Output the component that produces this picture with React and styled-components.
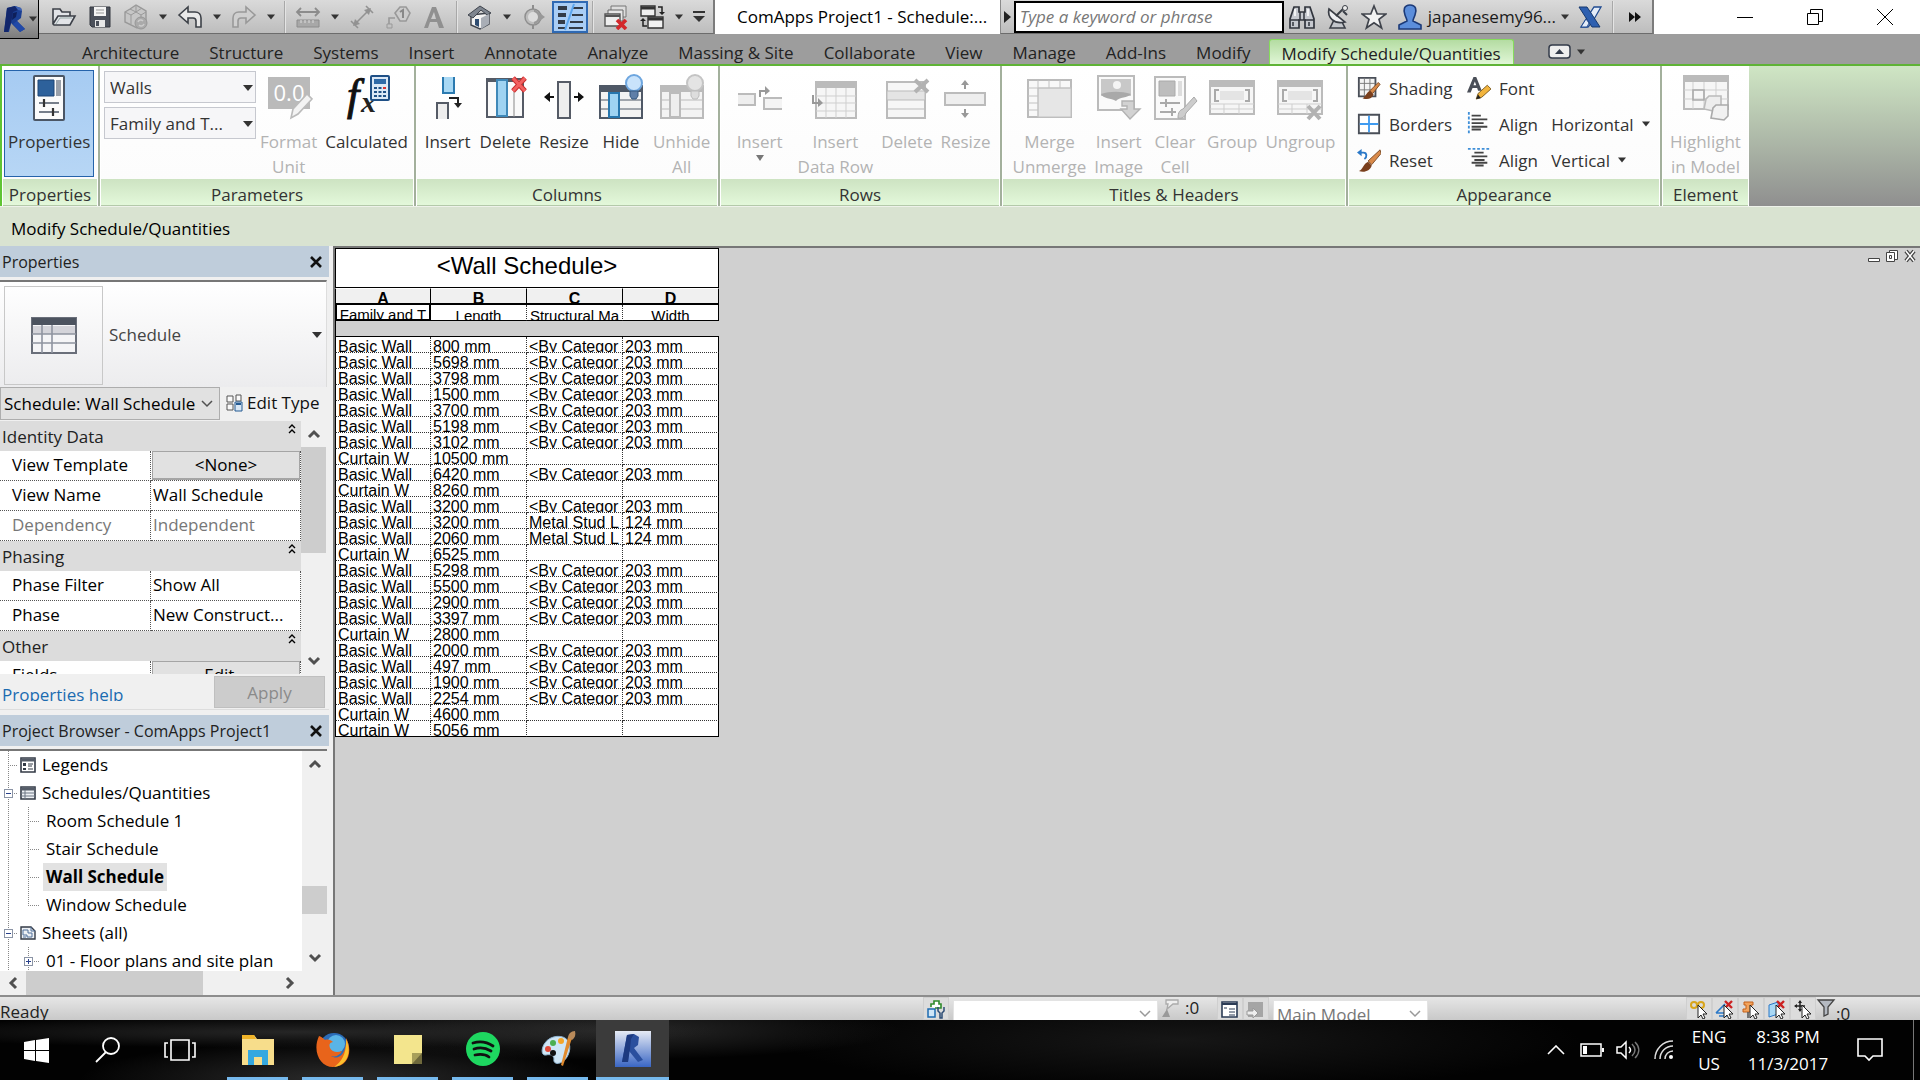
import React from 'react'
import styled, { createGlobalStyle, css } from 'styled-components'

const GlobalStyle = createGlobalStyle`
* { box-sizing: border-box; }
body {
  margin: 0;
  font-family: "Open Sans", "Noto Sans", sans-serif;
  font-size: 17px;
  color: #1a1a1a;
  overflow: hidden;
}
button, input, select { font: inherit; color: inherit; }
button { background: none; border: none; padding: 0; margin: 0; }
svg { display: block; flex: none; }
`

const App_ = styled.div`
  display: flex;
  flex-direction: column;
  height: 100vh;
  background: #f0f0f0;
`

/* ---------- title bar ---------- */
const TitleBar = styled.header`
  display: flex;
  height: 34px;
  flex: none;
  background: #fff;
`
const AppButton = styled.button`
  width: 39px;
  height: 39px;
  margin-bottom: -5px;
  padding-left: 3px;
  position: relative;
  z-index: 1;
  display: flex;
  align-items: center;
  gap: 3px;
  background: linear-gradient(#c4c4c4, #7c7c7c);
  border-right: 1px solid #000;
  border-bottom: 1px solid #000;
`
const BarStrip = styled.div`
  display: flex;
  align-items: center;
  background: linear-gradient(#dadada, #bdbdbd);
  border-right: 2px solid #7c7c7c;
  border-bottom: 1px solid #6c6c6c;
`
const QuickAccess = styled(BarStrip)`
  padding: 0 3px 0 7px;
`
const InfoCenter = styled(BarStrip)`
  border-left: 1px solid #8a8a8a;
`
const BarButton = styled.button`
  width: ${({ $w }) => $w || 36}px;
  height: 32px;
  display: flex;
  align-items: center;
  justify-content: center;
  ${({ $on }) => $on && css`
    background: #a9cdf5;
    border: 2px solid #2f69b3;
  `}
`
const BarLine = styled.span`
  width: 2px;
  height: 32px;
  margin: 0 4px;
  background: linear-gradient(90deg, #a8a8a8 50%, #e4e4e4 50%);
`
const WindowTitle = styled.h1`
  flex: 1;
  min-width: 0;
  margin: 0;
  padding-left: 22px;
  font-size: 17px;
  font-weight: 400;
  line-height: 34px;
  color: #000;
  white-space: nowrap;
  overflow: hidden;
`
const SearchBox = styled.input`
  width: 270px;
  height: 32px;
  padding: 0 4px;
  border: 2px solid #000;
  background: #fff;
  font-style: italic;
  outline: none;
  &::placeholder { color: #777; opacity: 1; }
`
const UserButton = styled.button`
  display: flex;
  align-items: center;
  height: 32px;
  padding: 0 3px 0 5px;
  gap: 5px;
`
const WindowButtons = styled.div`
  display: flex;
  padding-left: 56px;
`
const WindowButton = styled.button`
  width: 70px;
  display: flex;
  align-items: center;
  justify-content: center;
`

/* ---------- ribbon ---------- */
const Tabs = styled.nav`
  display: flex;
  align-items: flex-end;
  flex: none;
  height: 32px;
  padding-left: 67px;
  background: #9d9d9d;
  border-bottom: 2px solid #5fb336;
`
const Tab = styled.button`
  height: 25px;
  padding: 0 15px;
  line-height: 27px;
  white-space: nowrap;
  color: #222;
  ${({ $active }) => $active && css`
    margin-left: 3px;
    background: linear-gradient(#b4dca2, #e0f6d6);
    border: 1px solid #86dc5c;
    border-bottom: none;
    border-radius: 3px 3px 0 0;
    padding: 0 12px;
  `}
`
const RibbonToggle = styled.button`
  display: flex;
  align-items: center;
  gap: 6px;
  height: 25px;
  margin-left: 34px;
`
const Ribbon = styled.section`
  display: flex;
  flex: none;
  height: 140px;
  border-left: 2px solid #5fc434;
  background: linear-gradient(#cfe6c4, #8f8f8f);
`
const Panel = styled.div`
  flex: 0 0 ${({ $w }) => $w}px;
  min-width: 0;
  display: flex;
  flex-direction: column;
  background: #fff;
  border-right: 2px solid #a3b09c;
  padding: 0 1px;
  &:last-child { border-right: none; }
`
const PanelBody = styled.div`
  flex: 1;
  min-height: 0;
  display: flex;
  justify-content: ${({ $justify }) => $justify || 'center'};
  background: linear-gradient(#fff, #fcfcfc);
`
const PanelTitle = styled.h2`
  height: 27px;
  margin: 0;
  font-size: 17px;
  font-weight: 400;
  line-height: 31px;
  text-align: center;
  color: #333;
  background: linear-gradient(#cde3c2, #e3f8da);
  border-bottom: 1px solid #b4c9aa;
  overflow: hidden;
`
const BigButton = styled.button`
  display: flex;
  flex-direction: column;
  align-items: center;
  gap: 7px;
  padding: 8px 4px 0;
  line-height: 25px;
  white-space: pre;
  color: #333;
  &:disabled { color: #b3b3b3; }
  ${({ $on }) => $on && css`
    margin: 4px 1px 2px;
    padding: 3px 3px 0;
    background: linear-gradient(#a6cbf2, #b7d6f5);
    border: 1px solid #2563ab;
  `}
`
const ParamSelects = styled.div`
  display: flex;
  flex-direction: column;
  gap: 4px;
  padding: 5px 0 0 3px;
`
const SelectWrap = styled.div`
  position: relative;
  width: ${({ $w }) => $w}px;
  height: ${({ $h }) => $h || 32}px;
  svg {
    position: absolute;
    right: ${({ $inset }) => $inset || 2}px;
    top: 14px;
    pointer-events: none;
  }
`
const Select = styled.select`
  appearance: none;
  width: 100%;
  height: 100%;
  padding: 0 22px 0 ${({ $pad }) => $pad || 5}px;
  border: 1px solid ${({ $line }) => $line || '#c6c8cf'};
  border-radius: 0;
  background: ${({ $bg }) => $bg || '#f6f6f8'};
  color: ${({ $color }) => $color || '#333'};
`
const InstanceSelect = styled(SelectWrap)`
  svg { top: 10px; }
`
const AppearanceGrid = styled.div`
  display: grid;
  grid-template-columns: 110px 1fr;
  grid-auto-rows: 36px;
  flex: 1;
  padding: 4px 0 0 8px;
`
const SmallButton = styled.button`
  display: flex;
  align-items: center;
  gap: 8px;
  white-space: pre;
  color: #333;
`
const OptionsBar = styled.div`
  flex: none;
  height: 40px;
  padding-left: 11px;
  line-height: 44px;
  background: #d9e3d1;
  border-top: 1px solid #eef2ea;
  color: #000;
`

/* ---------- left dock ---------- */
const Main = styled.main`
  display: flex;
  flex: 1;
  min-height: 0;
`
const Dock = styled.aside`
  width: 333px;
  flex: none;
  display: flex;
  flex-direction: column;
  padding-right: 4px;
  background: #f0f0f0;
`
const DockHead = styled.div`
  flex: none;
  display: flex;
  align-items: center;
  justify-content: space-between;
  height: 31px;
  padding: 0 6px 0 2px;
  background: #bfcddb;
`
const DockTitle = styled.h2`
  margin: 0;
  font-size: 16px;
  font-weight: 400;
  color: #222;
`
const TypeSelector = styled.button`
  flex: none;
  display: flex;
  align-items: center;
  gap: 6px;
  height: 107px;
  margin: 3px 2px 0 0;
  padding: 0 3px 0 4px;
  border-top: 2px solid #777;
  border-right: 1px solid #ddd;
  background: linear-gradient(#fff, #ececee);
  color: #444;
`
const Thumb = styled.span`
  width: 99px;
  height: 99px;
  margin-top: 2px;
  display: flex;
  align-items: center;
  justify-content: center;
  border: 1px solid #c8c8c8;
`
const Grow = styled.span`
  flex: ${({ $n }) => $n || 1};
  text-align: left;
`
const InstanceRow = styled.div`
  flex: none;
  display: flex;
  height: 34px;
  gap: 6px;
`
const EditType = styled.button`
  display: flex;
  align-items: center;
  gap: 4px;
  padding-bottom: 3px;
  white-space: nowrap;
  color: #111;
`
const PropsScroll = styled.div`
  flex: 0 0 253px;
  display: flex;
  overflow: hidden;
  padding-right: 3px;
  background: #f0f0f0;
`
const PropsTable = styled.table`
  flex: 1;
  height: 0;
  border-collapse: separate;
  border-spacing: 0;
  table-layout: fixed;
  background: #fff;
  color: #000;
`
const GroupCell = styled.th`
  height: 30px;
  padding: 0 4px 0 2px;
  background: #dcdcdc;
  font-weight: 400;
  color: #222;
`
const GroupLine = styled.div`
  display: flex;
  align-items: center;
  justify-content: space-between;
  svg { margin-bottom: 14px; }
`
const PropName = styled.th`
  width: 151px;
  height: 30px;
  padding: 0 0 0 12px;
  text-align: left;
  vertical-align: top;
  font-weight: 400;
  white-space: nowrap;
  line-height: 28px;
  border-bottom: 1px dotted #555;
  border-right: 1px dotted #555;
  color: ${({ $muted }) => ($muted ? '#777' : '#000')};
`
const PropValue = styled.td`
  height: 30px;
  padding: 0 0 0 ${({ $button }) => ($button ? 1 : 2)}px;
  vertical-align: top;
  white-space: nowrap;
  line-height: 28px;
  border-bottom: 1px dotted #555;
  border-right: 1px dotted #555;
  color: ${({ $muted }) => ($muted ? '#777' : '#000')};
`
const ValueButton = styled.button`
  display: block;
  width: 100%;
  height: 29px;
  line-height: 26px;
  background: #e1e1e1;
  border: 1px solid #a5a5a5;
  border-bottom-width: 2px;
`
const ScrollV = styled.div`
  width: 25px;
  flex: none;
  display: flex;
  flex-direction: column;
  align-items: stretch;
  background: #f0f0f0;
`
const ScrollH = styled.div`
  flex: none;
  display: flex;
  height: 24px;
  padding-right: 26px;
  background: #f0f0f0;
`
const ScrollArrow = styled.button`
  flex: 0 0 26px;
  display: flex;
  align-items: center;
  justify-content: center;
`
const ScrollThumb = styled.span`
  flex: 0 0 ${({ $size }) => $size}px;
  background: #cdcdcd;
`
const HelpRow = styled.div`
  flex: none;
  display: flex;
  align-items: flex-start;
  justify-content: space-between;
  height: 36px;
  padding: 2px 4px 0 2px;
  border-bottom: 1px solid #ddd;
  margin-bottom: 5px;
`
const HelpLink = styled.a`
  height: 25px;
  line-height: 37px;
  overflow: hidden;
  color: #1b6bb0;
  text-decoration: none;
`
const ApplyButton = styled.button`
  width: 111px;
  height: 32px;
  background: #cccccc;
  border: 1px solid #bfbfbf;
  color: #8a8a8a;
`
const TreeWrap = styled.div`
  flex: 1;
  min-height: 0;
  display: flex;
  margin: 3px 2px 0 0;
  border-top: 2px solid #777;
  background: #fff;
`
const Tree = styled.ul`
  flex: 1;
  margin: 0;
  padding: 0;
  list-style: none;
  overflow: hidden;
  color: #000;
`
const TreeRow = styled.li`
  display: flex;
  align-items: center;
  height: 28px;
  white-space: nowrap;
`
const TreeLabel = styled.span`
  line-height: 28px;
  padding: 0 3px;
  ${({ $leaf }) => !$leaf && 'margin-left: 3px;'}
  ${({ $selected }) => $selected && css`
    font-weight: 700;
    background: #e2e2e2;
  `}
`

/* ---------- schedule ---------- */
const Canvas = styled.section`
  flex: 1;
  min-width: 0;
  display: flex;
  justify-content: space-between;
  align-items: flex-start;
  background: #d0d0d0;
  border-left: 2px solid #777;
  border-top: 2px solid #777;
  overflow: hidden;
`
const ScheduleTable = styled.table`
  width: 384px;
  table-layout: fixed;
  border-collapse: separate;
  border-spacing: 0;
  font-family: "Liberation Sans", Arial, sans-serif;
  font-size: 16px;
  color: #000;
`
const ScheduleTitle = styled.th`
  height: 40px;
  padding: 0;
  background: #fff;
  border: 1px solid #000;
  font-size: 24px;
  font-weight: 400;
  line-height: 34px;
  vertical-align: top;
`
const Letter = styled.th`
  height: 17px;
  padding: 0;
  background: #f0f0f0;
  border-right: 1px solid #000;
  border-bottom: 2px solid #000;
  border-top: 1px solid #fff;
  &:first-child { border-left: 1px solid #000; }
`
const Heading = styled.th`
  height: 16px;
  padding: 0;
  background: #fff;
  font-weight: 400;
  font-size: 15px;
  border-bottom: 1px solid #000;
  border-right: 1px dotted #333;
  &:first-child { border: 1px solid #000; border-width: 0 2px 2px; }
  &:last-child { border-right: 1px solid #000; }
`
const Spacer = styled.td`
  height: 16px;
  padding: 0;
  border-left: 1px solid #000;
  border-bottom: 1px solid #000;
`
const Cell = styled.td`
  height: 16px;
  padding: 0 0 0 2px;
  background: #fff;
  border-bottom: 1px dotted #333;
  border-right: 1px dotted #333;
  &:first-child { border-left: 1px solid #000; }
  &:last-child { border-right: 1px solid #000; }
  tr:last-child > & { border-bottom: 1px solid #000; }
`
const Clip = styled.div`
  height: ${({ $h }) => $h || 15}px;
  line-height: ${({ $lh }) => $lh || 19}px;
  overflow: hidden;
  white-space: nowrap;
`
const ChildButtons = styled.div`
  display: flex;
  gap: 4px;
  padding: 1px 3px 0 0;
`

/* ---------- status bar ---------- */
const StatusBar = styled.footer`
  flex: none;
  display: flex;
  align-items: flex-start;
  height: 25px;
  overflow: hidden;
  border-top: 2px solid #8d8d8d;
  background: linear-gradient(#e6e6e6, #c9c9c9);
  color: #222;
`
const Ready = styled.span`
  flex: 0 1 923px;
  line-height: 30px;
`
const StatusButton = styled.button`
  width: 26px;
  height: 23px;
  display: flex;
  align-items: center;
  justify-content: center;
  border: 1px solid #cfcfcf;
  background: #dcdcdc;
`
const StatusCount = styled.span`
  padding-left: ${({ $low }) => ($low ? 0 : 4)}px;
  line-height: ${({ $low }) => ($low ? 34 : 21)}px;
  width: ${({ $low }) => ($low ? 84 : 36)}px;
`
const StatusSelect = styled(SelectWrap)`
  height: 28px;
  margin: 3px 3px 0 4px;
  svg { top: 7px; }
`

/* ---------- taskbar ---------- */
const Taskbar = styled.footer`
  flex: none;
  display: flex;
  height: 60px;
  background:
    radial-gradient(ellipse 260px 40px at 340px 60px, #2c2c2c, transparent),
    radial-gradient(ellipse 420px 16px at 300px 12px, #262626, transparent),
    radial-gradient(ellipse 300px 30px at 600px 10px, #2a2a2a, transparent),
    radial-gradient(ellipse 400px 50px at 1180px 20px, #161616, transparent),
    #020202;
  color: #fff;
`
const TaskButton = styled.button`
  width: 72px;
  display: flex;
  align-items: center;
  justify-content: center;
`
const TaskApp = styled.button`
  width: 75px;
  padding: 0 ${({ $active }) => ($active ? 1 : 7)}px;
`
const TaskFace = styled.span`
  display: flex;
  align-items: center;
  justify-content: center;
  height: 60px;
  border-bottom: 3px solid #76b9ed;
  background: ${({ $active }) => ($active ? '#3b3b3b' : 'none')};
`
const TaskGroup = styled.div`
  display: flex;
  padding-left: 4px;
`
const Tray = styled.div`
  display: flex;
  margin-left: auto;
`
const TrayButton = styled.button`
  width: ${({ $w }) => $w || 36}px;
  display: flex;
  flex-direction: column;
  align-items: center;
  justify-content: center;
  line-height: 27px;
`
const ShowDesktop = styled.button`
  width: 7px;
  margin-left: 13px;
  border-left: 1px solid #777;
`

/* ---------- icons ---------- */
const Icon = ({ w = 26, h = w, vb, children, ...rest }) => (
  <svg width={w} height={h} viewBox={vb || `0 0 ${w} ${h}`} fill="none" aria-hidden="true" {...rest}>
    {children}
  </svg>
)
const Caret = ({ size = 10, color = '#333' }) => (
  <Icon w={size} h={6} vb="0 0 10 6"><path d="M0 0h10L5 6z" fill={color} /></Icon>
)
const Chevron = ({ dir = 'down', w = 14, stroke = '#505050', sw = 3 }) => {
  const turn = { down: 0, up: 180, left: 90, right: 270 }[dir]
  return (
    <Icon w={w} vb="0 0 14 14">
      <path d="M2 4l5 5 5-5" stroke={stroke} strokeWidth={sw} transform={`rotate(${turn} 7 7)`} />
    </Icon>
  )
}
const RevitLogo = () => (
  <Icon w={23} h={28}>
    <path d="M4 3l8-2 6 2 1 3-1 7-4 3 8 8-5 3-9-9-2 9H1z" fill="#1b3f93" />
    <path d="M4 3l8-2 3 4-5 2-2 11-3 9H1z" fill="#12266b" />
    <path d="M12 1l6 2 1 3-4-1z" fill="#3d62b5" />
    <path d="M10 8l4-1-1 5-4 3z" fill="#0e1f5a" />
    <path d="M14 16l8 8-5 3-7-8z" fill="#2149a8" />
  </Icon>
)
const OpenIcon = () => (
  <Icon><path d="M2 20V5h7l2 3h8v4M2 20l5-8h17l-5 9H3z" fill="#e2e4e8" stroke="#3c4048" strokeWidth="1.600" /><path d="M5 20l4-6h12" stroke="#9aa" /></Icon>
)
const SaveIcon = () => (
  <Icon><path d="M3 3h20v20H5l-2-2z" fill="#4c515b" stroke="#33373f" /><path d="M7 3h12v9H7z" fill="#f4f4f4" /><path d="M9 6h8M9 9h8" stroke="#999" /><path d="M8 16h10v7H8z" fill="#e6e6e6" /><path d="M9 17h3v5H9z" fill="#4c515b" /></Icon>
)
const SyncIcon = () => (
  <Icon><path d="M2 8l5-3 6-4 10 6v11l-9 6-12-6z" fill="#c6c6c6" stroke="#999" strokeWidth="1.400" /><path d="M2 8l6 3 5-3 5 3 5-3M8 11v9M13 2v6M18 11v5M7 5l6 3 6-4" stroke="#999" /><circle cx="18" cy="19" r="6" fill="#aaa" stroke="#979797" /><path d="M15 18a3 3 0 015-1m1 3a3 3 0 01-5 1" stroke="#ccc" strokeWidth="1.500" /></Icon>
)
const UndoIcon = ({ redo }) => (
  <Icon><path transform={redo ? 'matrix(-1 0 0 1 26 0)' : undefined} d="M2 11l9-8v5h7c4 0 6 3 6 6v9h-5v-6c0-2-1-3-3-3h-5v5z" fill={redo ? '#cfcfcf' : '#e9e9e9'} stroke={redo ? '#999' : '#3d4148'} strokeWidth="1.600" /></Icon>
)
const MeasureIcon = () => (
  <Icon><path d="M2 8h22M6 4L2 8l4 4M20 4l4 4-4 4" stroke="#8c8c8c" strokeWidth="1.800" /><path d="M2 16h22v7H2z" fill="#a8a8a8" stroke="#8c8c8c" /><path d="M6 16v3m4-3v3m4-3v3m4-3v3" stroke="#ddd" /></Icon>
)
const DimIcon = () => (
  <Icon><path d="M5 21L21 5M2 17l7 7M17 2l7 7" stroke="#929292" strokeWidth="1.600" /><path d="M4 22l2-7 5 5zM22 4l-7 2 5 5z" fill="#929292" /></Icon>
)
const TagIcon = () => (
  <Icon><path d="M10 9l5-6h6l4 6-4 8h-6z" fill="#ccc" stroke="#999" strokeWidth="1.600" /><path d="M15 8l3-2v8" stroke="#888" strokeWidth="2" /><path d="M10 14H4v6" stroke="#999" strokeWidth="1.600" /><path d="M2 20h5v4H2z" stroke="#999" /></Icon>
)
const TextIcon = () => (
  <Icon><path d="M3 24L11 3h4l8 21h-5l-2-6H9l-2 6zM10 15h5l-2-7z" fill="#909090" fillRule="evenodd" /></Icon>
)
const HouseIcon = () => (
  <Icon><path d="M4 11v10l9 4 9-5V9z" fill="#f3f3f3" stroke="#3f444d" strokeWidth="1.400" /><path d="M1 11L13 2l11 7-4 2-6-5-8 8z" fill="#7e858f" stroke="#3f444d" /><path d="M8 15h4v8l-4-2z" fill="#2f4d72" /><path d="M14 14l8-4v10l-8 5z" fill="#a9aeb6" /></Icon>
)
const SectionIcon = () => (
  <Icon><circle cx="12" cy="13" r="8" fill="#bdbdbd" stroke="#8e8e8e" strokeWidth="1.500" /><path d="M12 1v4M12 21v4" stroke="#8e8e8e" strokeWidth="2" /><path d="M13 5l11 8-11 8z" fill="#999" /><circle cx="12" cy="13" r="5" fill="#dcdcdc" /></Icon>
)
const ThinLinesIcon = () => (
  <Icon w={30}><path d="M3 6h9M3 13h8M3 20h7" stroke="#333b47" strokeWidth="4" /><path d="M18 6h10M17 13h11M15 20h13M3 26h7M14 26h14" stroke="#333b47" strokeWidth="2" /><path d="M19 2L10 28" stroke="#5ba5ee" strokeWidth="2" /></Icon>
)
const CloseHiddenIcon = () => (
  <Icon><path d="M8 2h15v11H8z" fill="#ddd" stroke="#777" /><path d="M5 6h15v11H5z" fill="#e7e7e7" stroke="#666" /><path d="M2 10h15v12H2z" fill="#eee" stroke="#555" strokeWidth="1.400" /><path d="M2 12h15" stroke="#555" strokeWidth="2" /><path d="M14 16l9 9M23 16l-9 9" stroke="#d3282b" strokeWidth="3.600" /></Icon>
)
const SwitchIcon = () => (
  <Icon><path d="M2 2h14v10H2z" fill="#eee" stroke="#333" strokeWidth="1.400" /><path d="M2 4h14" stroke="#333" strokeWidth="3" /><path d="M9 13h15v11H9z" fill="#f2f2f2" stroke="#333" strokeWidth="1.400" /><path d="M9 15h15" stroke="#333" strokeWidth="3" /><path d="M19 3h4v6M4 15v7h4" stroke="#222" strokeWidth="1.500" /><path d="M20 8h6l-3 3zM1 17l3-3 3 3z" fill="#222" /></Icon>
)
const Binoculars = () => (
  <Icon><path d="M5 3h5v5h6V3h5l4 12v9h-9v-8h-6v8H1v-9z" fill="#c6c9cf" stroke="#30343c" strokeWidth="1.700" /><path d="M11 8v8M15 8v8M1 16h9M16 16h9M4 18v4M20 18v4" stroke="#30343c" strokeWidth="1.500" /><path d="M6 5v7M19 5v7" stroke="#fff" strokeWidth="1.500" /></Icon>
)
const Dish = () => (
  <Icon><path d="M5 24l4-8 8 2 3 6z" fill="#c3c6cb" stroke="#3a3e46" strokeWidth="1.600" /><path d="M4 5c-2 8 5 16 16 13z" fill="#eceef1" stroke="#3a3e46" strokeWidth="1.700" /><path d="M11 12l8-8M18 7l4 4" stroke="#3a3e46" strokeWidth="2" /><circle cx="20" cy="4" r="2.500" fill="#eee" stroke="#3a3e46" /></Icon>
)
const StarIcon = () => (
  <Icon><path d="M13 2l3.200 8H25l-7 5.400L20.600 24 13 18.800 5.400 24 8 15.400 1 10h8.800z" fill="#f2f2f2" stroke="#40444c" strokeWidth="1.700" /></Icon>
)
const UserIcon = () => (
  <Icon><path d="M13 1c6 0 7 5 5 10-1 3-2 4-2 6l8 4v4H2v-4l8-4c0-2-1-3-2-6C6 6 7 1 13 1z" fill="#5c8edb" stroke="#1c3a78" strokeWidth="1.600" /></Icon>
)
const ExchangeIcon = () => (
  <Icon><path d="M24 3h-7L4 23h7l5-6z" fill="#e4ecf8" stroke="#1f4a90" strokeWidth="1.300" /><path d="M2 3h8l4 6 9 14h-8l-4-6z" fill="#2d5fb0" stroke="#16396f" /><path d="M4 23l5-8 3 4-2 4z" fill="#e4ecf8" stroke="#1f4a90" /></Icon>
)

const PropertiesIcon = () => (
  <Icon w={48}><rect x="9" y="2" width="30" height="44" rx="1" fill="#fbfbfb" stroke="#4b5665" strokeWidth="2" /><path d="M13 6h16v16H13z" fill="#2d619b" stroke="#1f4676" /><path d="M31 6h5v16h-5z" fill="#9aa1ab" /><path d="M14 29h20M14 38h20" stroke="#4b5665" strokeWidth="1.600" /><path d="M19 25v8M28 34v8" stroke="#333" strokeWidth="2.200" /></Icon>
)
const FormatIcon = () => (
  <Icon w={48}><path d="M3 3h42v32H3z" fill="#bababa" /><text x="24" y="27" textAnchor="middle" fontFamily="Open Sans" fontSize="22" fill="#fff">0.0</text><path d="M26 44l2-9 14-15 5 5-14 15z" fill="#f3f3f3" stroke="#bbb" strokeWidth="1.600" /></Icon>
)
const CalcIcon = () => (
  <Icon w={48}>
    <text x="4" y="36" fontFamily="Liberation Serif" fontStyle="italic" fontWeight="400" fontSize="44" fill="#111" stroke="#111">f</text>
    <text x="18" y="38" fontFamily="Liberation Serif" fontStyle="italic" fontWeight="700" fontSize="30" fill="#222">x</text>
    <rect x="28" y="2" width="18" height="24" rx="1" fill="#dbe8f6" stroke="#1f5086" strokeWidth="2" />
    <path d="M31 5h12v5H31z" fill="#2f6aa8" />
    <path d="M31 14h12M31 18h12M31 22h12" stroke="#1f5086" strokeWidth="2" strokeDasharray="3 1.500" />
    <path d="M40 14h3" stroke="#d33" strokeWidth="2" />
  </Icon>
)
const ColInsertIcon = () => (
  <Icon w={48}><path d="M19 3v16h11V3" fill="#a8d8f4" stroke="#2b7ab0" strokeWidth="2" /><path d="M13 45V29h11v16" fill="#eee" stroke="#555b66" strokeWidth="2" /><path d="M25 24h9v6" stroke="#222" strokeWidth="2" /><path d="M30 29h8l-4 5z" fill="#222" /></Icon>
)
const ColDeleteIcon = () => (
  <Icon w={48}><path d="M6 5h36v38H6z" fill="#fafafa" stroke="#555b66" strokeWidth="2" /><path d="M6 5h26v3H6z" fill="#555b66" /><path d="M16 6h10v36H16z" fill="#9fd3f2" stroke="#3f88b8" strokeWidth="2" /><path d="M33 16v27" stroke="#888" /><path d="M32 4l12 13M44 4L32 17" stroke="#c92d2d" strokeWidth="5" /><path d="M32 4l12 13M44 4L32 17" stroke="#f26060" strokeWidth="3" /></Icon>
)
const ColResizeIcon = () => (
  <Icon w={48}><path d="M18 8h12v36H18z" fill="#eee" stroke="#555b66" strokeWidth="2" /><path d="M14 23H8M34 23h6" stroke="#111" strokeWidth="2" /><path d="M10 18v10l-6-5zM38 18v10l6-5z" fill="#111" /></Icon>
)
const ColHideIcon = ({ muted }) => {
  const line = muted ? '#bbb' : '#4f5866'
  return (
    <Icon w={48}><path d="M3 12h42v32H3z" fill="#f3f3f3" stroke={line} strokeWidth="2" /><path d="M3 12h42v6H3z" fill={line} /><path d="M3 26h42M3 35h42" stroke={line} /><path d="M12 19h10v24H12z" fill={muted ? '#eee' : '#9fd3f2'} stroke={muted ? '#bbb' : '#2776ad'} strokeWidth="2" /><circle cx="37" cy="9" r="8" fill={muted ? '#e4e4e4' : '#c9e3fb'} stroke={muted ? '#c4c4c4' : '#6ea6df'} strokeWidth="2" /><path d="M33 17h8v5l-2 3h-4l-2-3z" fill={muted ? '#ddd' : '#5f7fa8'} stroke={muted ? '#bbb' : '#34587f'} /></Icon>
  )
}
const RowInsertIcon = () => (
  <Icon w={48}><path d="M2 20h17v11H2" fill="#eee" stroke="#bbb" strokeWidth="2" /><path d="M46 24H28v11h18" fill="#f4f4f4" stroke="#bbb" strokeWidth="2" /><path d="M24 23v-6h6" stroke="#999" strokeWidth="2" /><path d="M29 12v9l5-4z" fill="#999" /></Icon>
)
const RowDataIcon = () => (
  <Icon w={48}><path d="M5 8h40v36H5z" fill="#f6f6f6" stroke="#bbb" strokeWidth="2" /><path d="M5 8h40v6H5z" fill="#bbb" /><path d="M5 22h40M5 29h40M5 37h40M15 14v30M25 14v30M35 14v30" stroke="#cfcfcf" /><path d="M2 21v8h6" stroke="#999" strokeWidth="2" /><path d="M7 24v9l5-4z" fill="#999" /></Icon>
)
const RowDeleteIcon = () => (
  <Icon w={48}><path d="M4 8h38v36H4z" fill="#f6f6f6" stroke="#bbb" strokeWidth="2" /><path d="M4 17h38v9H4z" fill="#e4e4e4" stroke="#bbb" /><path d="M4 35h38" stroke="#bbb" /><path d="M32 6l13 12M45 6L32 18" stroke="#b2b2b2" strokeWidth="4" /></Icon>
)
const RowResizeIcon = () => (
  <Icon w={48}><path d="M4 19h40v12H4z" fill="#eee" stroke="#bbb" strokeWidth="2" /><path d="M24 15V9M24 35v5" stroke="#999" strokeWidth="2" /><path d="M20 11h8l-4-5zM20 39h8l-4 5z" fill="#999" /></Icon>
)
const MergeIcon = () => (
  <Icon w={48}><path d="M3 6h43v37H3z" fill="#f8f8f8" stroke="#bbb" strokeWidth="2" /><path d="M13 14h33v29H13z" fill="#e6e6e6" stroke="#c2c2c2" /><path d="M13 6v37M3 14h43M24 6v8M35 6v8M3 22h10M3 29h10M3 36h10" stroke="#c2c2c2" /></Icon>
)
const ImageIcon = () => (
  <Icon w={48}><path d="M3 2h36v34H3z" fill="#fafafa" stroke="#bbb" strokeWidth="2" /><path d="M6 5h30v17H6z" fill="#c8c8c8" /><circle cx="22" cy="11" r="4" fill="#f4f4f4" /><path d="M6 20c9-3 20-3 30 0-3 4-12 3-15 7-5-3-13-2-15-7z" fill="#a9a9a9" /><path d="M27 27h12v8h6L35 45l-9-10h6v-3h-5z" fill="#d2d2d2" stroke="#b2b2b2" strokeWidth="1.400" /></Icon>
)
const ClearIcon = () => (
  <Icon w={48}><path d="M4 3h30v42H4z" fill="#fafafa" stroke="#bbb" strokeWidth="2" /><path d="M8 7h16v15H8z" fill="#bdbdbd" stroke="#aaa" /><path d="M27 7h4v15h-4z" fill="#ddd" /><path d="M9 29h20M9 38h16M15 25v8M21 34v8" stroke="#aaa" strokeWidth="2" /><path d="M27 44c0-6 2-8 5-9L43 23l3 4-11 12c-1 4-4 6-8 5z" fill="#ccc" stroke="#aaa" /></Icon>
)
const GroupIcon = ({ un }) => (
  <Icon w={48}><path d="M2 7h44v33H2z" fill="#f6f6f6" stroke="#bbb" strokeWidth="2" /><path d="M2 7h44v6H2z" fill="#bbb" /><path d="M2 30h44M16 30v10M31 30v10M2 35h44" stroke="#cfcfcf" /><path d="M11 16H7v11h4M37 16h4v11h-4" stroke="#aaa" strokeWidth="2" /><path d="M12 17h24v9H12z" fill="#e4e4e4" />{un && <path d="M32 32l12 13M44 32L32 45" stroke="#b2b2b2" strokeWidth="4" />}</Icon>
)
const HighlightIcon = () => (
  <Icon w={48}><path d="M2 2h44v33H2z" fill="#f6f6f6" stroke="#bbb" strokeWidth="2" /><path d="M2 2h44v6H2z" fill="#bbb" /><path d="M2 16h44M2 25h44M11 8v27M22 8v27M34 8v27" stroke="#cfcfcf" /><path d="M11 16h11v10H11z" stroke="#aaa" strokeWidth="1.600" /><path d="M22 35l2-10 3-3h12v12l-3 4z" fill="#ededed" stroke="#bbb" strokeWidth="1.600" /><path d="M29 44l2-10 3-3h12v11l-4 4z" fill="#f1f1f1" stroke="#aaa" strokeWidth="1.600" /></Icon>
)

const Brush = () => <><path d="M23 7l-9 9 3 3 8-10z" fill="#d98a4a" stroke="#7a4a25" /><path d="M6 24c3-1 4-6 8-8l4 4c-2 5-7 6-12 4z" fill="#7a3f1d" /></>
const ShadingIcon = () => (
  <Icon w={24} vb="0 0 26 26"><path d="M2 2h18v20H2z" fill="#f4f4f4" stroke="#4a4f58" strokeWidth="2" /><path d="M8 2v20M14 2v20M2 8h18M2 15h18" stroke="#777" /><Brush /></Icon>
)
const BordersIcon = () => (
  <Icon w={24} vb="0 0 26 26"><path d="M2 3h22v20H2z" fill="#fff" stroke="#4a4f58" strokeWidth="2" /><path d="M13 4v18M3 13h20" stroke="#3f9bf0" strokeWidth="2" /></Icon>
)
const ResetIcon = () => (
  <Icon w={24} vb="0 0 26 26"><path d="M25 2L12 14l4 4L26 6z" fill="#d98a4a" stroke="#7a4a25" /><path d="M2 25c4-1 5-8 10-10l4 4c-2 6-8 8-14 6z" fill="#7a3f1d" /><path d="M3 5h4c4 0 4 5 1 7" stroke="#2a78c8" strokeWidth="2" /><path d="M0 5l5-4v8z" fill="#2a78c8" /></Icon>
)
const FontIcon = () => (
  <Icon w={24} vb="0 0 26 26"><path d="M0 18L7 1h3l6 15h-4l-1-3H6l-2 5zM7 10h3L8.500 6z" fill="#4a4f58" fillRule="evenodd" /><path d="M10 25l2-6 10-9 4 4-10 9z" fill="#f2b43c" stroke="#7b5a1e" /><path d="M10 25l2-5 3 4z" fill="#222" /></Icon>
)
const AlignHIcon = () => (
  <Icon w={24} vb="0 0 26 26"><path d="M2 0v25" stroke="#3f8fd8" strokeWidth="2" strokeDasharray="3 2" /><path d="M5 4h10M5 8h17M5 12h13M5 16h17M5 19h10" stroke="#444" strokeWidth="2" /></Icon>
)
const AlignVIcon = () => (
  <Icon w={24} vb="0 0 26 26"><path d="M1 1h24" stroke="#3f8fd8" strokeWidth="2" strokeDasharray="3 2" /><path d="M8 5h10M5 9h17M8 13h11M5 16h17M9 19h9" stroke="#444" strokeWidth="2" /></Icon>
)

const ScheduleThumb = () => (
  <Icon w={46} h={38}><path d="M1 1h44v35H1z" fill="#f5f5f7" stroke="#6a6f7a" strokeWidth="2" /><path d="M1 1h44v7H1z" fill="#4c535f" /><path d="M2 9h42v8H2z" fill="#d4d4da" /><path d="M1 17h44M1 26h44M11 8v28M21 8v28" stroke="#8f94a0" strokeWidth="1.600" /></Icon>
)
const EditTypeIcon = () => (
  <Icon w={17} h={18}><path d="M1 2h6v6H1zM10 1h5v6h-5zM1 10h6v6H1z" stroke="#555" fill="#fafafa" /><path d="M9 8h7v9H9z" fill="#d9e7f5" stroke="#245a92" /><path d="M10 10h5" stroke="#245a92" strokeWidth="2" /></Icon>
)
const CollapseIcon = () => (
  <Icon w={9} h={10}><path d="M1 4l3-3 3 3M1 9l3-3 3 3" stroke="#000" strokeWidth="1.400" /></Icon>
)
const XIcon = () => (
  <Icon w={14}><path d="M2 2l10 10M12 2L2 12" stroke="#111" strokeWidth="2.600" /></Icon>
)
const LegendIcon = () => (
  <Icon w={16}><path d="M1 1h14v14H1z" fill="#fff" stroke="#333a46" strokeWidth="1.600" /><path d="M1 3h14" stroke="#555c68" strokeWidth="3" /><path d="M3 6h3v3H3zM3 11h3v2H3z" fill="#333a46" /><path d="M8 7h5M8 9h4M8 12h5" stroke="#333a46" /></Icon>
)
const TableIcon = () => (
  <Icon w={16}><path d="M1 2h14v12H1z" fill="#eef1f5" stroke="#333a46" strokeWidth="1.600" /><path d="M1 4h14" stroke="#555c68" strokeWidth="3" /><path d="M5 5v9M1 8h14M1 11h14" stroke="#6c7684" /></Icon>
)
const SheetIcon = () => (
  <Icon w={16}><path d="M1 2h10l4 4v8H1z" fill="#eef1f5" stroke="#333a46" strokeWidth="1.400" /><path d="M11 2v4h4M3 5h5v3h4v4H7v-2H3zM3 12h3" stroke="#51709b" /></Icon>
)
const Guide = ({ w = 20, line = 'full', branch = true, box }) => (
  <Icon w={w} h={28}>
    {line !== 'none' && <path d={`M8.500 0V${line === 'half' ? 14 : 28}`} stroke="#888" strokeDasharray="1 1" />}
    {branch && <path d={`M8 14.500H${w - 3}`} stroke="#888" strokeDasharray="1 1" />}
    {box && <rect x="4.500" y="10.500" width="8" height="8" fill="#fff" stroke="#8b94a5" />}
    {box && <path d={box === 'plus' ? 'M6 14.500h5M8.500 12v5' : 'M6 14.500h5'} stroke="#27408b" />}
  </Icon>
)

const Cursor = () => <path d="M9 6v13l3-3 2 4 2-1-2-4h4z" fill="#fff" stroke="#222" />
const statusIcons = {
  worksets: <><path d="M2 10h7v8H2z" fill="#cfe6f8" stroke="#1e6bb0" strokeWidth="1.500" /><path d="M5 8V5h3V2h5v3h2v4h-6" fill="#fff" stroke="#2f8a2a" strokeWidth="1.600" /><path d="M12 8v4l2 2v5h2v-5l2-2V8" stroke="#2b4b74" strokeWidth="1.500" /></>,
  editable: <><path d="M5 3h12v4h-5l-6 5 1-5H5z" fill="#eee" stroke="#aaa" strokeWidth="1.300" /><path d="M1 20l5-8 3 8z" fill="#999" /></>,
  options: <><path d="M2 3h15v15H2z" fill="#fff" stroke="#2b3b55" strokeWidth="1.600" /><path d="M2 5h15" stroke="#2b3b55" strokeWidth="2" /><path d="M4 9h3M9 10h6M9 13h6M9 16h6" stroke="#2b3b55" /></>,
  addTo: <><path d="M2 3h15v15H2z" fill="#a5a5a5" /><path d="M1 12h6V9l5 5-5 5v-3H1z" fill="#eee" stroke="#999" /></>,
  links: <><circle cx="5" cy="6" r="3" stroke="#d8a51c" strokeWidth="2" /><circle cx="12" cy="6" r="3" stroke="#d8a51c" strokeWidth="2" /><Cursor /></>,
  underlay: <><path d="M1 14l9-9M1 14h9M4 17h8" stroke="#2a78c8" strokeWidth="1.600" /><path d="M10 2l7 7M17 2l-7 7" stroke="#c22" strokeWidth="2.400" /><Cursor /></>,
  pinned: <><path d="M3 3h9v3h-2v4h3v3H2v-3h3V6H3z" fill="#f2a35c" stroke="#c4601a" /><path d="M7 13v6" stroke="#555" strokeWidth="1.500" /><Cursor /></>,
  face: <><path d="M2 6l9-3v12l-9 3z" fill="#a9d8f5" stroke="#2a78c8" /><path d="M10 2l7 7M17 2l-7 7" stroke="#c22" strokeWidth="2.400" /><Cursor /></>,
  drag: <><path d="M7 2v10M2 7h10" stroke="#222" strokeWidth="1.500" /><path d="M5 4l2-3 2 3zM5 10l2 3 2-3zM4 5L1 7l3 2z" fill="#222" /><Cursor /></>,
  filter: <path d="M2 3h16l-6 7v7l-4 2v-9z" fill="#b5bac2" stroke="#444" strokeWidth="1.300" />,
}
const StatusIcon = ({ name }) => <Icon w={20}>{statusIcons[name]}</Icon>

const taskIcons = {
  explorer: <Icon w={36}><path d="M2 4h12l3 4h17v26H2z" fill="#f7dd8b" /><path d="M2 4h12l2 4H2z" fill="#f0b429" /><path d="M8 34V19h20v15h-6v-8h-8v8z" fill="#35a8e0" /></Icon>,
  firefox: <Icon w={36}><circle cx="19" cy="17" r="15" fill="#2b6cb8" /><circle cx="21" cy="13" r="9" fill="#59b4e6" /><path d="M4 5c3 1 4 2 6 4 3-1 6 0 8 2-4 1-4 3-3 6 2 4 7 5 12 3-3 6-9 6-11 5 8 5 16-3 15-18 7 12 3 29-13 29C5 36-3 20 4 5z" fill="#e8641b" /><path d="M31 8c6 12 2 26-12 28 8-5 13-15 12-28z" fill="#fbc02d" /></Icon>,
  notes: <Icon w={36}><path d="M4 4h28v18l-10 11H4z" fill="#f3e58d" /><path d="M22 33V22h10v11z" fill="#6f693c" /><path d="M22 33V22h10z" fill="#a89f5a" /></Icon>,
  spotify: <Icon w={36}><circle cx="18" cy="18" r="17" fill="#1ed760" /><path d="M8 12c7-2 14-1 20 3M9 18c6-2 12-1 17 2M10 24c5-1 10-1 14 2" stroke="#111" strokeWidth="2.800" strokeLinecap="round" /></Icon>,
  paint: <Icon w={38}><path d="M6 13c5-8 19-9 23-2 4 6 1 17-6 21-5 3-9 1-8-3 0-4-4-5-8-4C2 26 2 18 6 13z" fill="#cfe6f6" stroke="#8fb3cf" /><circle cx="9" cy="19" r="3" fill="#e04a3a" /><circle cx="14" cy="13" r="3" fill="#4caf50" /><circle cx="22" cy="11" r="3" fill="#f4a62a" /><circle cx="14" cy="23" r="3" fill="#111" /><path d="M33 8l-9 28-2-1 7-28z" fill="#e08a2e" /><path d="M29 8c0-4 3-7 7-7 1 4 0 7-3 9z" fill="#b98a5a" /></Icon>,
  revit: <Icon w={36}><defs><linearGradient id="rv" x1="0" y1="0" x2="0" y2="1"><stop stopColor="#e6ebf5" /><stop offset="1" stopColor="#3a66c4" /></linearGradient></defs><path d="M0 0h36v36H0z" fill="url(#rv)" /><path d="M12 4l7-1 5 3-1 8-4 3 9 12-5 2-9-11-1 11H7z" fill="#2a4f9e" /><path d="M12 4l7-1-3 5-1 10-2 13H7z" fill="#1d3a80" /></Icon>,
}

const tabs = ['Architecture', 'Structure', 'Systems', 'Insert', 'Annotate', 'Analyze', 'Massing & Site',
  'Collaborate', 'View', 'Manage', 'Add-Ins', 'Modify']

const B = ['Basic Wall', '<By Categor', '203 mm']
const M = ['Basic Wall', 'Metal Stud L', '124 mm']
const C = ['Curtain W', '', '']
const rows = [
  [B, '800'], [B, '5698'], [B, '3798'], [B, '1500'], [B, '3700'], [B, '5198'], [B, '3102'], [C, '10500'],
  [B, '6420'], [C, '8260'], [B, '3200'], [M, '3200'], [M, '2060'], [C, '6525'], [B, '5298'], [B, '5500'],
  [B, '2900'], [B, '3397'], [C, '2800'], [B, '2000'], [B, '497'], [B, '1900'], [B, '2254'], [C, '4600'],
  [C, '5056'],
]

const Big = ({ icon, label, ...rest }) => (
  <BigButton {...rest}>{icon}<span>{label}</span></BigButton>
)

const RibbonPanel = ({ title, w, justify, children }) => (
  <Panel $w={w}>
    <PanelBody $justify={justify}>{children}</PanelBody>
    <PanelTitle>{title}</PanelTitle>
  </Panel>
)

const Group = ({ children }) => (
  <tr><GroupCell colSpan={2}><GroupLine>{children}<CollapseIcon /></GroupLine></GroupCell></tr>
)

const Prop = ({ name, value, muted, button }) => (
  <tr>
    <PropName scope="row" $muted={muted}>{name}</PropName>
    <PropValue $muted={muted} $button={button}>{button ? <ValueButton>{value}</ValueButton> : value}</PropValue>
  </tr>
)

const Header = () => (
  <TitleBar>
    <AppButton aria-label="Application menu"><RevitLogo /><Caret size={8} /></AppButton>
    <QuickAccess>
      <BarButton aria-label="Open"><OpenIcon /></BarButton>
      <BarButton aria-label="Save"><SaveIcon /></BarButton>
      <BarButton aria-label="Synchronize"><SyncIcon /></BarButton>
      <BarButton $w={18} aria-label="Synchronize options"><Caret size={8} /></BarButton>
      <BarButton aria-label="Undo"><UndoIcon /></BarButton>
      <BarButton $w={18} aria-label="Undo list"><Caret size={8} /></BarButton>
      <BarButton aria-label="Redo"><UndoIcon redo /></BarButton>
      <BarButton $w={18} aria-label="Redo list"><Caret size={8} /></BarButton>
      <BarLine />
      <BarButton aria-label="Measure"><MeasureIcon /></BarButton>
      <BarButton $w={18} aria-label="Measure options"><Caret size={8} /></BarButton>
      <BarButton aria-label="Aligned dimension"><DimIcon /></BarButton>
      <BarButton aria-label="Tag by category"><TagIcon /></BarButton>
      <BarButton aria-label="Text"><TextIcon /></BarButton>
      <BarLine />
      <BarButton aria-label="Default 3D view"><HouseIcon /></BarButton>
      <BarButton $w={18} aria-label="3D view options"><Caret size={8} /></BarButton>
      <BarButton aria-label="Section"><SectionIcon /></BarButton>
      <BarButton $on aria-label="Thin lines"><ThinLinesIcon /></BarButton>
      <BarLine />
      <BarButton aria-label="Close hidden windows"><CloseHiddenIcon /></BarButton>
      <BarButton aria-label="Switch windows"><SwitchIcon /></BarButton>
      <BarButton $w={18} aria-label="Window list"><Caret size={8} /></BarButton>
      <BarButton $w={22} aria-label="Customize toolbar">
        <Icon w={12} h={11}><path d="M0 1h12" stroke="#333" strokeWidth="2" /><path d="M0 5h12l-6 6z" fill="#333" /></Icon>
      </BarButton>
    </QuickAccess>
    <WindowTitle>ComApps Project1 - Schedule:...</WindowTitle>
    <InfoCenter>
      <BarButton $w={13} aria-label="Collapse search"><Icon w={7} h={12}><path d="M0 0l7 6-7 6z" fill="#222" /></Icon></BarButton>
      <SearchBox type="text" placeholder="Type a keyword or phrase" aria-label="Search help" />
      <BarButton aria-label="Search"><Binoculars /></BarButton>
      <BarButton aria-label="Communication center"><Dish /></BarButton>
      <BarButton aria-label="Favorites"><StarIcon /></BarButton>
      <UserButton><UserIcon />japanesemy96...<Caret size={8} /></UserButton>
      <BarButton aria-label="Exchange apps"><ExchangeIcon /></BarButton>
      <BarLine />
      <BarButton $w={34} aria-label="More">
        <Icon w={12} h={10}><path d="M0 0l6 5-6 5zM6 0l6 5-6 5z" fill="#111" /></Icon>
      </BarButton>
    </InfoCenter>
    <WindowButtons>
      <WindowButton aria-label="Minimize"><Icon w={16}><path d="M0 8.500h16" stroke="#000" /></Icon></WindowButton>
      <WindowButton aria-label="Restore"><Icon w={16}><path d="M.5 4.500h11v11H.5zM3.500 4V.5h12v12H12" stroke="#000" /></Icon></WindowButton>
      <WindowButton aria-label="Close"><Icon w={16}><path d="M0 0l16 16M16 0L0 16" stroke="#000" /></Icon></WindowButton>
    </WindowButtons>
  </TitleBar>
)

const RibbonBar = () => (
  <Ribbon>
    <RibbonPanel title="Properties" w={98} justify="flex-start">
      <Big $on icon={<PropertiesIcon />} label="Properties" />
    </RibbonPanel>
    <RibbonPanel title="Parameters" w={316} justify="flex-start">
      <ParamSelects>
        {['Walls', 'Family and T...'].map((v, i) => (
          <SelectWrap key={v} $w={152}>
            <Select aria-label={i ? 'Field' : 'Category'}><option>{v}</option></Select>
            <Caret size={12} />
          </SelectWrap>
        ))}
      </ParamSelects>
      <Big disabled icon={<FormatIcon />} label={'Format\nUnit'} />
      <Big icon={<CalcIcon />} label="Calculated" />
    </RibbonPanel>
    <RibbonPanel title="Columns" w={304}>
      <Big icon={<ColInsertIcon />} label="Insert" />
      <Big icon={<ColDeleteIcon />} label="Delete" />
      <Big icon={<ColResizeIcon />} label="Resize" />
      <Big icon={<ColHideIcon />} label="Hide" />
      <Big disabled icon={<ColHideIcon muted />} label={'Unhide\nAll'} />
    </RibbonPanel>
    <RibbonPanel title="Rows" w={282}>
      <Big disabled icon={<RowInsertIcon />} label={<>Insert<Icon w={60} h={8} vb="0 0 60 8"><path d="M26 1h8l-4 6z" fill="#777" /></Icon></>} />
      <Big disabled icon={<RowDataIcon />} label={'Insert\nData Row'} />
      <Big disabled icon={<RowDeleteIcon />} label="Delete" />
      <Big disabled icon={<RowResizeIcon />} label="Resize" />
    </RibbonPanel>
    <RibbonPanel title="Titles & Headers" w={346}>
      <Big disabled icon={<MergeIcon />} label={'Merge\nUnmerge'} />
      <Big disabled icon={<ImageIcon />} label={'Insert\nImage'} />
      <Big disabled icon={<ClearIcon />} label={'Clear\nCell'} />
      <Big disabled icon={<GroupIcon />} label="Group" />
      <Big disabled icon={<GroupIcon un />} label="Ungroup" />
    </RibbonPanel>
    <RibbonPanel title="Appearance" w={314}>
      <AppearanceGrid>
        <SmallButton><ShadingIcon />Shading</SmallButton>
        <SmallButton><FontIcon />Font</SmallButton>
        <SmallButton><BordersIcon />Borders</SmallButton>
        <SmallButton><AlignHIcon />{'Align   Horizontal'}<Caret size={8} /></SmallButton>
        <SmallButton><ResetIcon />Reset</SmallButton>
        <SmallButton><AlignVIcon />{'Align   Vertical'}<Caret size={8} /></SmallButton>
      </AppearanceGrid>
    </RibbonPanel>
    <RibbonPanel title="Element" w={87}>
      <Big disabled icon={<HighlightIcon />} label={'Highlight\nin Model'} />
    </RibbonPanel>
  </Ribbon>
)

const PropertiesPalette = () => (
  <>
    <DockHead><DockTitle>Properties</DockTitle><button aria-label="Close properties"><XIcon /></button></DockHead>
    <TypeSelector><Thumb><ScheduleThumb /></Thumb><Grow>Schedule</Grow><Caret size={12} /></TypeSelector>
    <InstanceRow>
      <InstanceSelect $w={220} $h={33} $inset={6}>
        <Select aria-label="Instance" $pad={3} $bg="#e1e1e1" $line="#adadad" $color="#000"><option>Schedule: Wall Schedule</option></Select>
        <Chevron sw={1.5} />
      </InstanceSelect>
      <EditType><EditTypeIcon />Edit Type</EditType>
    </InstanceRow>
    <PropsScroll>
      <PropsTable>
        <colgroup><col width="151" /><col /></colgroup>
        <tbody>
          <Group>Identity Data</Group>
          <Prop name="View Template" value="<None>" button />
          <Prop name="View Name" value="Wall Schedule" />
          <Prop name="Dependency" value="Independent" muted />
          <Group>Phasing</Group>
          <Prop name="Phase Filter" value="Show All" />
          <Prop name="Phase" value="New Construct..." />
          <Group>Other</Group>
          <Prop name="Fields" value="Edit..." button />
        </tbody>
      </PropsTable>
      <ScrollV>
        <ScrollArrow aria-label="Scroll up"><Chevron dir="up" /></ScrollArrow>
        <ScrollThumb $size={106} />
        <Grow />
        <ScrollArrow aria-label="Scroll down"><Chevron /></ScrollArrow>
      </ScrollV>
    </PropsScroll>
    <HelpRow><HelpLink href="#help">Properties help</HelpLink><ApplyButton disabled>Apply</ApplyButton></HelpRow>
  </>
)

const leaves = ['Room Schedule 1', 'Stair Schedule', 'Wall Schedule', 'Window Schedule']

const ProjectBrowser = () => (
  <>
    <DockHead><DockTitle>Project Browser - ComApps Project1</DockTitle><button aria-label="Close browser"><XIcon /></button></DockHead>
    <TreeWrap>
      <Tree>
        <TreeRow><Guide /><LegendIcon /><TreeLabel>Legends</TreeLabel></TreeRow>
        <TreeRow><Guide box="minus" /><TableIcon /><TreeLabel>Schedules/Quantities</TreeLabel></TreeRow>
        {leaves.map((name, i) => (
          <TreeRow key={name}>
            <Guide branch={false} />
            <Guide w={23} line={i === 3 ? 'half' : 'full'} />
            <TreeLabel $leaf $selected={i === 2}>{name}</TreeLabel>
          </TreeRow>
        ))}
        <TreeRow><Guide box="minus" /><SheetIcon /><TreeLabel>Sheets (all)</TreeLabel></TreeRow>
        <TreeRow><Guide branch={false} /><Guide w={23} box="plus" /><TreeLabel $leaf>01 - Floor plans and site plan</TreeLabel></TreeRow>
      </Tree>
      <ScrollV>
        <ScrollArrow aria-label="Scroll up"><Chevron dir="up" /></ScrollArrow>
        <Grow $n={110} />
        <ScrollThumb $size={28} />
        <Grow $n={31} />
        <ScrollArrow aria-label="Scroll down"><Chevron /></ScrollArrow>
      </ScrollV>
    </TreeWrap>
    <ScrollH>
      <ScrollArrow aria-label="Scroll left"><Chevron dir="left" /></ScrollArrow>
      <ScrollThumb $size={177} />
      <Grow />
      <ScrollArrow aria-label="Scroll right"><Chevron dir="right" /></ScrollArrow>
    </ScrollH>
  </>
)

const Schedule = () => (
  <Canvas>
    <ScheduleTable>
      <thead>
        <tr><ScheduleTitle colSpan={4}>&lt;Wall Schedule&gt;</ScheduleTitle></tr>
        <tr>{['A', 'B', 'C', 'D'].map((l) => <Letter key={l}><Clip $h={14} $lh={19}>{l}</Clip></Letter>)}</tr>
        <tr>{['Family and T', 'Length', 'Structural Ma', 'Width'].map((h) => <Heading key={h}><Clip $h={14} $lh={19}>{h}</Clip></Heading>)}</tr>
      </thead>
      <tbody>
        <tr><Spacer colSpan={4} /></tr>
        {rows.map(([[family, material, width], length], i) => (
          <tr key={i}>
            <Cell><Clip>{family}</Clip></Cell>
            <Cell><Clip>{length} mm</Clip></Cell>
            <Cell><Clip>{material}</Clip></Cell>
            <Cell><Clip>{width}</Clip></Cell>
          </tr>
        ))}
      </tbody>
    </ScheduleTable>
    <ChildButtons>
      <button aria-label="Minimize view"><Icon w={14}><path d="M1.500 9.500h11v3h-11z" fill="#fff" stroke="#444" /></Icon></button>
      <button aria-label="Restore view"><Icon w={14}><path d="M4.500 1.500h8v9h-8z" stroke="#444" fill="#fff" /><path d="M1.500 3.500h8v9h-8z" fill="#fff" stroke="#444" /><path d="M4.500 6.500h2v3h-2z" stroke="#444" /></Icon></button>
      <button aria-label="Close view"><Icon w={14}><path d="M3 2l8 10M11 2L3 12" stroke="#444" strokeWidth="4" /><path d="M3 2l8 10M11 2L3 12" stroke="#fff" strokeWidth="1.500" /></Icon></button>
    </ChildButtons>
  </Canvas>
)

const Status = () => (
  <StatusBar>
    <Ready>Ready</Ready>
    <StatusButton aria-label="Worksets"><StatusIcon name="worksets" /></StatusButton>
    <StatusSelect $w={205} $inset={6}>
      <Select aria-label="Active workset" $bg="#fff" $line="#e3e3e3" />
      <Chevron stroke="#999" sw={1.5} />
    </StatusSelect>
    <StatusIcon name="editable" />
    <StatusCount>:0</StatusCount>
    <StatusButton aria-label="Design options"><StatusIcon name="options" /></StatusButton>
    <StatusButton disabled aria-label="Add to set"><StatusIcon name="addTo" /></StatusButton>
    <StatusSelect $w={155} $inset={6}>
      <Select aria-label="Design option" $pad={3} $bg="#fff" $line="#e3e3e3" $color="#777"><option>Main Model</option></Select>
      <Chevron stroke="#999" sw={1.5} />
    </StatusSelect>
    <Grow />
    {['links', 'underlay', 'pinned', 'face', 'drag'].map((n) => (
      <StatusButton key={n} aria-label={`Select ${n}`}><StatusIcon name={n} /></StatusButton>
    ))}
    <StatusIcon name="filter" />
    <StatusCount $low>:0</StatusCount>
  </StatusBar>
)

const Tasks = () => (
  <Taskbar>
    <TaskButton aria-label="Start"><Icon w={25}><path d="M0 4l11-2v10H0zM12 2l13-2v12H12zM0 13h11v10L0 21zM12 13h13v12l-13-2z" fill="#fff" /></Icon></TaskButton>
    <TaskButton aria-label="Search"><Icon w={26}><circle cx="16" cy="9" r="8" stroke="#fff" strokeWidth="1.800" /><path d="M11 15L1 25" stroke="#fff" strokeWidth="1.800" /></Icon></TaskButton>
    <TaskButton aria-label="Task view"><Icon w={32} h={22}><path d="M7 1h18v20H7z" stroke="#fff" strokeWidth="1.600" /><path d="M4 4H1v14h3M28 4h3v14h-3" stroke="#fff" strokeWidth="1.600" /></Icon></TaskButton>
    <TaskGroup>
      {Object.keys(taskIcons).map((k) => (
        <TaskApp key={k} $active={k === 'revit'} aria-label={k}>
          <TaskFace $active={k === 'revit'}>{taskIcons[k]}</TaskFace>
        </TaskApp>
      ))}
    </TaskGroup>
    <Tray>
      <TrayButton aria-label="Hidden icons"><Icon w={18} h={10}><path d="M1 9l8-8 8 8" stroke="#fff" strokeWidth="1.600" /></Icon></TrayButton>
      <TrayButton aria-label="Battery"><Icon w={24} h={14}><path d="M1 1h20v12H1z" stroke="#fff" strokeWidth="1.500" /><path d="M22 5h2v4h-2zM3 3h4v8H3z" fill="#fff" /></Icon></TrayButton>
      <TrayButton aria-label="Volume"><Icon w={24} h={20}><path d="M1 7h4l5-5v16l-5-5H1z" stroke="#fff" strokeWidth="1.500" /><path d="M13 7c2 2 2 4 0 6" stroke="#fff" strokeWidth="1.500" /><path d="M16 4c4 4 4 8 0 12M19 2c5 5 5 11 0 16" stroke="#777" strokeWidth="1.500" /></Icon></TrayButton>
      <TrayButton aria-label="Network"><Icon w={20}><path d="M1 19A18 18 0 0119 1M6 19A13 13 0 0119 6M11 19a8 8 0 018-8" stroke="#ddd" strokeWidth="1.500" /><circle cx="17" cy="17" r="2" fill="#fff" /></Icon></TrayButton>
      <TrayButton $w={54}><span>ENG</span><span>US</span></TrayButton>
      <TrayButton $w={104}><span>8:38 PM</span><span>11/3/2017</span></TrayButton>
      <TrayButton $w={60} aria-label="Notifications"><Icon w={26} h={24}><path d="M1 1h24v17h-9l-4 4-4-4H1z" stroke="#fff" strokeWidth="1.600" /></Icon></TrayButton>
      <ShowDesktop aria-label="Show desktop" />
    </Tray>
  </Taskbar>
)

const App = () => {
  return (
    <App_>
      <GlobalStyle />
      <Header />
      <Tabs>
        {tabs.map((t) => <Tab key={t}>{t}</Tab>)}
        <Tab $active>Modify Schedule/Quantities</Tab>
        <RibbonToggle aria-label="Minimize ribbon">
          <Icon w={23} h={15}><rect x="1" y="1" width="21" height="13" rx="3" fill="#eee" stroke="#333b4a" strokeWidth="1.500" /><path d="M7 10h9l-4.500-5z" fill="#333b4a" /></Icon>
          <Caret size={8} />
        </RibbonToggle>
      </Tabs>
      <RibbonBar />
      <OptionsBar>Modify Schedule/Quantities</OptionsBar>
      <Main>
        <Dock>
          <PropertiesPalette />
          <ProjectBrowser />
        </Dock>
        <Schedule />
      </Main>
      <Status />
      <Tasks />
    </App_>
  )
}

export default App
